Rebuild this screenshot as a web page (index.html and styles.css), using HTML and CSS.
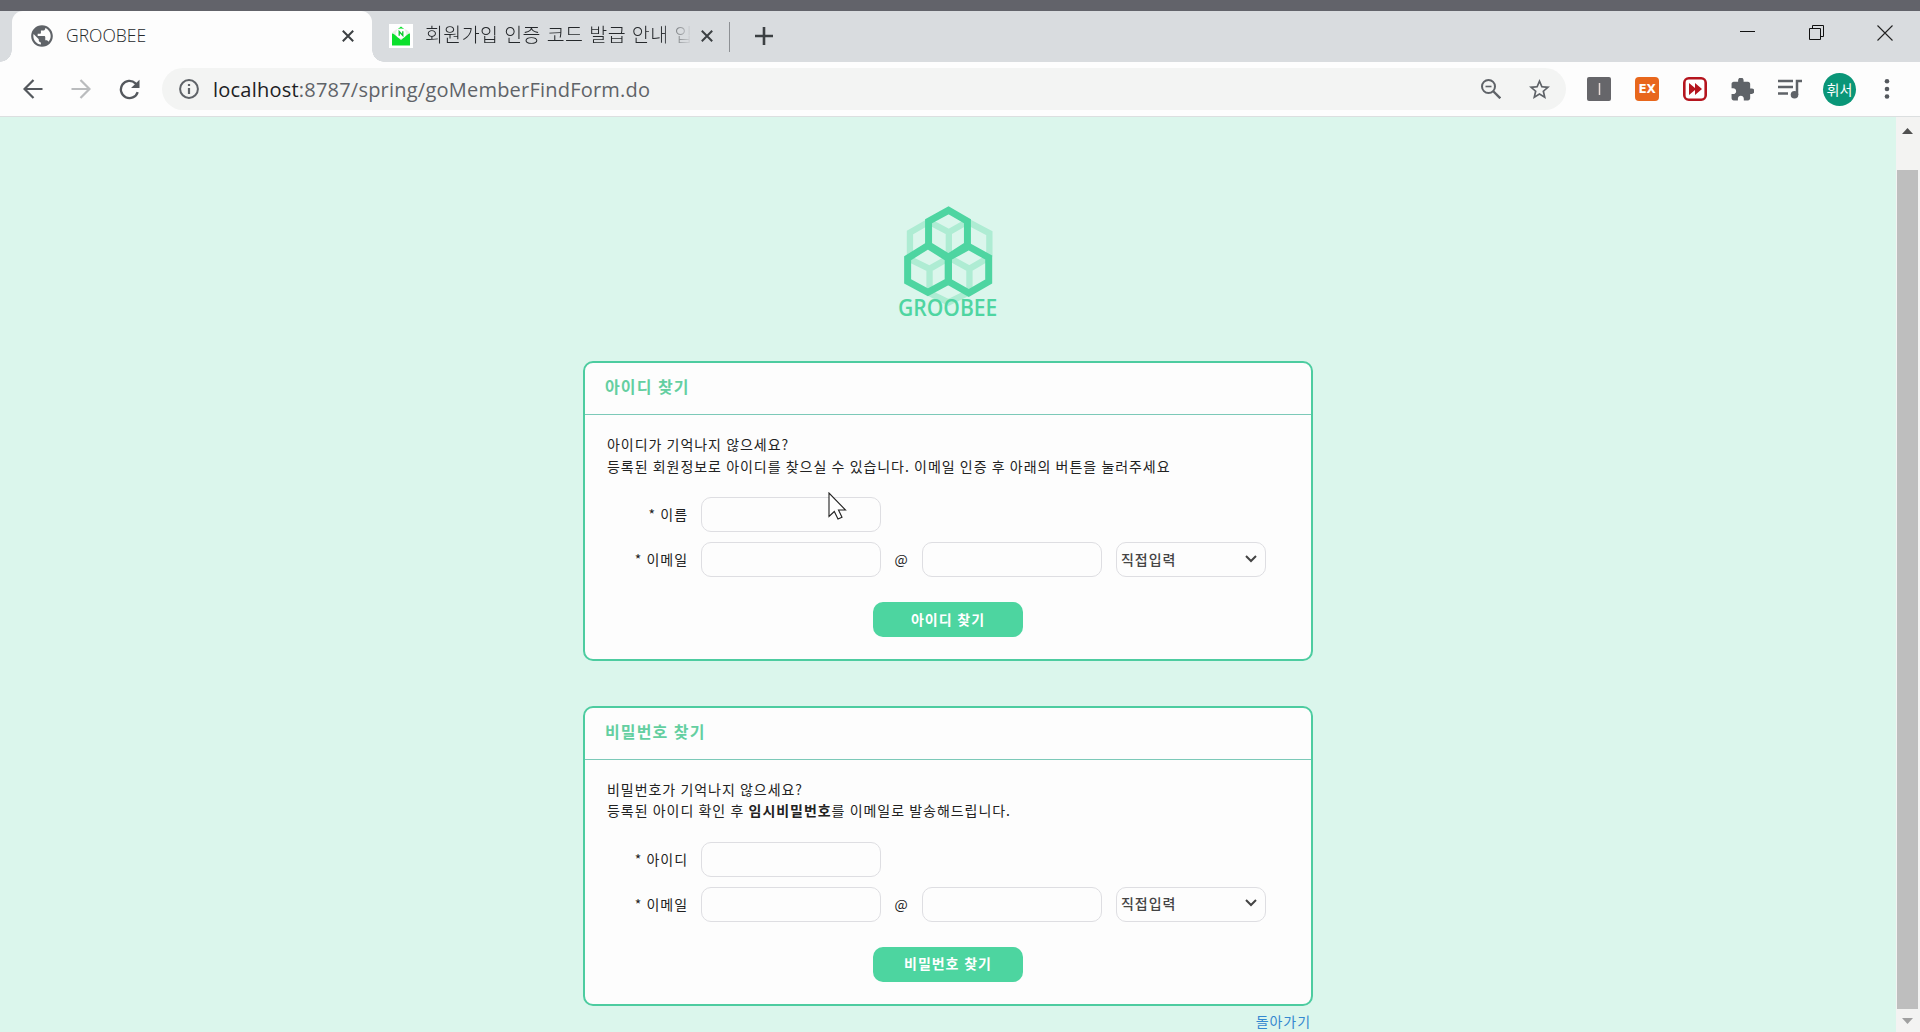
FILE: index.html
```html
<!DOCTYPE html>
<html lang="ko">
<head>
<meta charset="utf-8">
<title>GROOBEE</title>
<link rel="stylesheet" href="styles.css">
</head>
<body>
<div class="browser">
  <div class="backdrop"></div>
  <header class="tabstrip">
    <div class="tab tab-active">
      <svg class="globe" viewBox="0 0 24 24" width="26" height="26"><path fill="#5f6368" d="M12 2C6.480 2 2 6.480 2 12s4.480 10 10 10 10-4.480 10-10S17.520 2 12 2zm-1 17.930c-3.950-.490-7-3.850-7-7.930 0-.620.080-1.210.210-1.790L9 15v1c0 1.100.9 2 2 2v1.930zm6.900-2.540c-.260-.810-1-1.390-1.900-1.390h-1v-3c0-.550-.450-1-1-1H8v-2h2c.550 0 1-.450 1-1V7h2c1.100 0 2-.9 2-2v-.410c2.930 1.190 5 4.060 5 7.410 0 2.080-.8 3.970-2.100 5.390z"/></svg>
      <span class="tab-title">GROOBEE</span>
      <svg class="tab-close" viewBox="0 0 12 12" width="12" height="12"><path d="M.8.8l10.400 10.400M11.200.8L.8 11.200" stroke="#3c4043" stroke-width="2"/></svg>
    </div>
    <div class="tab tab-idle">
      <svg class="mail" viewBox="0 0 24 24" width="24" height="24"><rect width="24" height="24" fill="#fff"/><path d="M3 9.500h18V21.500H3z" fill="#0be02c"/><path d="M9 5l3-2.500L15 5z" fill="#0be02c"/><path d="M3 8.500l9 7.500 9-7.500-4-3H7z" fill="#e9efe6"/><circle cx="12" cy="9.500" r="5" fill="#fff"/><path d="M10.200 11.700V7.500l3.600 4V7.300" fill="none" stroke="#0bc82c" stroke-width="1.300"/></svg>
      <span class="tab-title tab-title-idle">회원가입 인증 코드 발급 안내 입</span>
      <svg class="tab-close" viewBox="0 0 12 12" width="12" height="12"><path d="M.8.8l10.400 10.400M11.200.8L.8 11.200" stroke="#3c4043" stroke-width="2"/></svg>
    </div>
    <div class="tab-divider"></div>
    <svg class="new-tab" viewBox="0 0 18 18" width="18" height="18"><path d="M9 0v18M0 9h18" stroke="#3c4043" stroke-width="2.600"/></svg>
    <div class="window-buttons">
      <svg viewBox="0 0 16 16" width="16" height="16"><path d="M0 6.500h15" stroke="#111"/></svg>
      <svg viewBox="0 0 16 16" width="16" height="16"><path d="M.5 3.500h11v11H.5zM3.500 3.500v-3h11v11h-3" fill="none" stroke="#111"/></svg>
      <svg viewBox="0 0 16 16" width="16" height="16"><path d="M.5.5l15 15M15.500.5l-15 15" stroke="#222" stroke-width="1.100"/></svg>
    </div>
  </header>
  <nav class="toolbar">
    <div class="nav-buttons">
      <svg viewBox="0 0 20 20" width="20" height="20"><path d="M19.500 10H2M10.500 .9L1.500 10l9 9.100" fill="none" stroke="#54585d" stroke-width="2.200"/></svg>
      <svg viewBox="0 0 20 20" width="20" height="20"><path d="M.5 10h17.500M9.500 .9l9 9.100-9 9.100" fill="none" stroke="#babcbe" stroke-width="2.200"/></svg>
      <svg viewBox="0 0 20 20" width="21" height="21"><path d="M17.800 12.500A8.200 8.200 0 1 1 15.700 4.100L17.500 6" fill="none" stroke="#54585d" stroke-width="2.200"/><path d="M19.500 .6v8h-8z" fill="#54585d"/></svg>
    </div>
    <div class="address">
      <svg viewBox="0 0 20 20" width="20" height="20"><circle cx="10" cy="10" r="8.900" fill="none" stroke="#5f6368" stroke-width="2"/><path d="M10 9v6M10 5v2" stroke="#5f6368" stroke-width="2.200"/></svg>
      <span class="url"><span class="host">localhost</span>:8787/spring/goMemberFindForm.do</span>
      <svg class="magnifier" viewBox="0 0 20 20" width="20" height="20"><circle cx="7.500" cy="7.500" r="6.500" fill="none" stroke="#5f6368" stroke-width="2"/><path d="M12 12l7.300 7.300" stroke="#5f6368" stroke-width="2.400"/><path d="M4.500 7.500h6" stroke="#5f6368" stroke-width="1.600"/></svg>
      <svg viewBox="2 2 20 20" width="21" height="21"><path fill="#5f6368" d="M22 9.240l-7.190-.620L12 2 9.190 8.630 2 9.240l5.460 4.730L5.820 21 12 17.270 18.180 21l-1.630-7.030L22 9.240zM12 15.400l-3.760 2.270 1-4.280-3.320-2.880 4.380-.380L12 6.100l1.710 4.040 4.380.380-3.320 2.880 1 4.280L12 15.400z"/></svg>
    </div>
    <div class="extensions">
      <svg viewBox="0 0 24 24" width="24" height="24"><rect width="24" height="24" rx="2" fill="#66666a"/><path d="M12.500 6v12" stroke="#e8dcd8" stroke-width="1.500"/></svg>
      <span class="ext-ex">EX</span>
      <svg viewBox="0 0 24 24" width="24" height="24"><rect x="1.300" y="1.300" width="21.400" height="21.400" rx="4.500" fill="#fff" stroke="#b5151e" stroke-width="2.600"/><path d="M6 6l6 5v-5l7 6-7 6v-5l-6 5z" fill="#b5151e"/></svg>
      <svg viewBox="1.500 1.500 21 21" width="23" height="23"><path fill="#5f6368" d="M20.500 11H19V7c0-1.100-.9-2-2-2h-4V3.500C13 2.120 11.880 1 10.500 1S8 2.120 8 3.500V5H4c-1.100 0-1.990.9-1.990 2v3.800H3.500c1.490 0 2.700 1.210 2.700 2.700s-1.210 2.700-2.700 2.700H2V20c0 1.100.9 2 2 2h3.800v-1.500c0-1.490 1.210-2.700 2.700-2.700s2.700 1.210 2.700 2.700V22H17c1.100 0 2-.9 2-2v-4h1.500c1.380 0 2.500-1.120 2.500-2.500S21.880 11 20.500 11z"/></svg>
      <svg viewBox="0 0 24 20" width="24" height="20"><path d="M0 2h15M0 8h15M0 14.500h10" stroke="#5f6368" stroke-width="2.300"/><path d="M24 2h-5v14" fill="none" stroke="#5f6368" stroke-width="2.500"/><circle cx="16.500" cy="15.800" r="3.800" fill="#5f6368"/></svg>
      <span class="avatar">휘서</span>
      <svg class="dots" viewBox="0 0 6 20" width="6" height="20"><g fill="#54585d"><circle cx="3" cy="2.300" r="2.300"/><circle cx="3" cy="10" r="2.300"/><circle cx="3" cy="17.500" r="2.300"/></g></svg>
    </div>
  </nav>
  <div class="viewport">
    <main class="page">
      <svg class="logo" viewBox="110 40 310 350" width="103" height="117">
        <g fill="none" stroke="#aeecd3" stroke-width="19">
          <path d="M206 95l-57 33v70M322 95l66 35v70M206 95l60 32 56-32M266 127v70"/>
          <path d="M142 205l66 32 56-32M208 237v70M266 203l62 34 58-34M328 237v70M203 308l62 30 61-30"/>
        </g>
        <g fill="none" stroke="#4ed5a1" stroke-width="21">
          <path d="M265 61l57 33v71l-57 37-60-37V94z"/>
          <path d="M203 167l61 38v70l-61 33-61-33v-70z"/>
          <path d="M326 170l60 33v72l-60 35-61-35v-72z"/>
        </g>
        <text x="113" y="380" textLength="299" lengthAdjust="spacingAndGlyphs" class="logo-text">GROOBEE</text>
      </svg>
      <section class="card">
        <h2 class="card-title">아이디 찾기</h2>
        <div class="card-body">
          <p class="description">아이디가 기억나지 않으세요?<br>등록된 회원정보로 아이디를 찾으실 수 있습니다. 이메일 인증 후 아래의 버튼을 눌러주세요</p>
          <div class="form-row"><label class="label">* 이름</label><input class="field" type="text"></div>
          <div class="form-row"><label class="label">* 이메일</label><input class="field" type="text"><span class="at">@</span><input class="field" type="text">
            <div class="select">직접입력<svg viewBox="0 0 12 8" width="12" height="8"><path d="M1 1l5 5 5-5" fill="none" stroke="#444" stroke-width="2"/></svg></div></div>
          <button class="submit">아이디 찾기</button>
        </div>
      </section>
      <section class="card">
        <h2 class="card-title">비밀번호 찾기</h2>
        <div class="card-body">
          <p class="description">비밀번호가 기억나지 않으세요?<br>등록된 아이디 확인 후 <b>임시비밀번호</b>를 이메일로 발송해드립니다.</p>
          <div class="form-row"><label class="label">* 아이디</label><input class="field" type="text"></div>
          <div class="form-row"><label class="label">* 이메일</label><input class="field" type="text"><span class="at">@</span><input class="field" type="text">
            <div class="select">직접입력<svg viewBox="0 0 12 8" width="12" height="8"><path d="M1 1l5 5 5-5" fill="none" stroke="#444" stroke-width="2"/></svg></div></div>
          <button class="submit">비밀번호 찾기</button>
        </div>
      </section>
      <a class="back-link">돌아가기</a>
    </main>
    <aside class="scrollbar">
      <svg viewBox="0 0 11 6" width="11" height="6"><path d="M0 6L5.500 0 11 6z" fill="#505050"/></svg>
      <div class="thumb"></div>
      <svg viewBox="0 0 11 6" width="11" height="6"><path d="M0 0l5.500 6L11 0z" fill="#a0a0a0"/></svg>
    </aside>
  </div>
  <svg class="cursor" viewBox="0 0 19 28" width="19" height="28"><path d="M1 1v23.500l5.300-5 3.700 7.500 4-1.800-3.500-7.200H17.500z" fill="#fff" stroke="#222" stroke-width="1.100"/></svg>
</div>
</body>
</html>
```
FILE: styles.css
```css
* { box-sizing: border-box; }
body { margin: 0; font-family: "Noto Sans CJK KR", "Noto Sans CJK SC", sans-serif; }
svg { display: block; flex: none; }
.browser { position: relative; width: 1920px; height: 1032px; display: flex; flex-direction: column; overflow: hidden; }
.backdrop { height: 11px; flex: none; background: #62636a; }

.tabstrip { height: 51px; flex: none; display: flex; align-items: center; padding-left: 12px; background: #d9dcdf; }
.tab { display: flex; align-items: center; height: 51px; padding-bottom: 2px; }
.tab-active { position: relative; width: 360px; padding: 0 18px 2px 17px; background: #fdfdfd; border-radius: 11px 11px 0 0; }
.tab-active::before, .tab-active::after { content: ""; position: absolute; bottom: 0; width: 12px; height: 12px; }
.tab-active::before { left: -12px; background: radial-gradient(circle at 0 0, transparent 11.500px, #fdfdfd 12px); }
.tab-active::after { right: -12px; background: radial-gradient(circle at 100% 0, transparent 11.500px, #fdfdfd 12px); }
.tab-title { flex: 1; margin-left: 11px; padding-bottom: 1px; font: 300 17.500px/26px "Open Sans", sans-serif; letter-spacing: 0; color: #25282b; white-space: nowrap; }
.tab-idle { width: 344px; padding-left: 17px; }
.tab-title-idle { flex: none; width: 267px; margin: 0 9px 0 12px; padding-bottom: 3px; overflow: hidden; font: 300 19.500px/30px "Noto Sans CJK KR", "Noto Sans CJK SC", sans-serif; letter-spacing: .4px; -webkit-mask-image: linear-gradient(90deg, #000 235px, transparent 267px); mask-image: linear-gradient(90deg, #000 235px, transparent 267px); }
.tab-divider { width: 1px; height: 30px; margin-left: 13px; background: #8d9094; }
.new-tab { margin: 0 0 1px 25px; }
.window-buttons { display: flex; gap: 52.500px; margin: -7px 27px 0 auto; }

.toolbar { height: 55px; flex: none; display: flex; align-items: center; background: #fdfdfd; border-bottom: 1px solid #dcdfe0; }
.nav-buttons { display: flex; align-items: center; gap: 28px; width: 162px; padding-left: 23px; }
.address { display: flex; align-items: center; width: 1404px; height: 42px; padding: 0 16px 0 17px; background: #f3f4f3; border-radius: 21px; }
.url { flex: 1; margin-left: 14px; padding-top: 1px; font: 20px/30px "Open Sans", sans-serif; letter-spacing: .22px; color: #5f6368; }
.host { color: #202124; }
.magnifier { margin-right: 28px; }
.extensions { display: flex; align-items: center; margin-left: 21px; gap: 24px; }
.ext-ex { width: 24px; height: 24px; border-radius: 4px; background: #e8671c; color: #fff; font: bold 12px/24px "DejaVu Sans", sans-serif; text-align: center; letter-spacing: -.3px; }
.avatar { width: 33px; height: 33px; border-radius: 50%; background: #0a9678; color: #fff; font-size: 14px; line-height: 32px; text-align: center; margin-left: -3px; }
.dots { margin-left: 4px; }

.viewport { flex: 1; min-height: 0; display: flex; }
.page { flex: 1; display: flex; flex-direction: column; align-items: center; overflow: hidden; padding-top: 86px; background: #dbf6ec; }
.logo { margin-bottom: 41px; overflow: visible; }
.logo-text { font: 600 70px "Open Sans", sans-serif; fill: #4ed5a1; }
.card { flex: none; width: 730px; height: 300px; margin-bottom: 44.500px; background: #fdfdfd; border: 2px solid #4dcca0; border-radius: 10px; }
.card-title { height: 52px; margin: 0; padding: 0 0 3px 20px; border-bottom: 1px solid #7cc9b8; font-size: 16px; line-height: 47px; letter-spacing: 1.100px; font-weight: 700; color: #64cfa1; }
.card-body { display: flex; flex-direction: column; padding: 19px 22px; }
.description { margin: 0 0 20px; font-size: 14px; line-height: 21.500px; letter-spacing: .95px; word-spacing: -.6px; color: #222; white-space: nowrap; }
.form-row { display: flex; height: 35px; margin-bottom: 10px; font-size: 14px; line-height: 34px; letter-spacing: .95px; word-spacing: -.6px; color: #222; }
.label { width: 81px; margin-right: 13px; text-align: right; }
.field { width: 180px; height: 35px; padding: 0 8px; border: 1px solid #dedee2; border-radius: 10px; background: transparent; outline: none; font: inherit; }
.at { width: 41px; text-align: center; }
.select { display: flex; align-items: center; justify-content: space-between; width: 150px; height: 35px; margin-left: 14px; padding: 0 8px 2px 4px; border: 1px solid #dedee2; border-radius: 10px; font-weight: 500; color: #444; }
.submit { align-self: center; width: 150px; height: 35px; margin-top: 15px; padding: 0 0 1px; border: 0; border-radius: 10px; background: #4dd5a0; color: #fff; font: bold 14px/33px "Noto Sans CJK KR", "Noto Sans CJK SC", sans-serif; letter-spacing: .95px; }
.back-link { align-self: flex-end; margin: -40px 585px 0 0; font-size: 14px; line-height: 22px; letter-spacing: .95px; color: #3488d0; white-space: nowrap; }
.scrollbar { width: 24px; flex: none; display: flex; flex-direction: column; align-items: center; padding: 11px 1px 8px 0; background: #f3f3f2; }
.thumb { width: 21px; height: 839px; margin: 36px 0 auto; background: #bebebe; }
.cursor { position: absolute; left: 828px; top: 492px; }
```
